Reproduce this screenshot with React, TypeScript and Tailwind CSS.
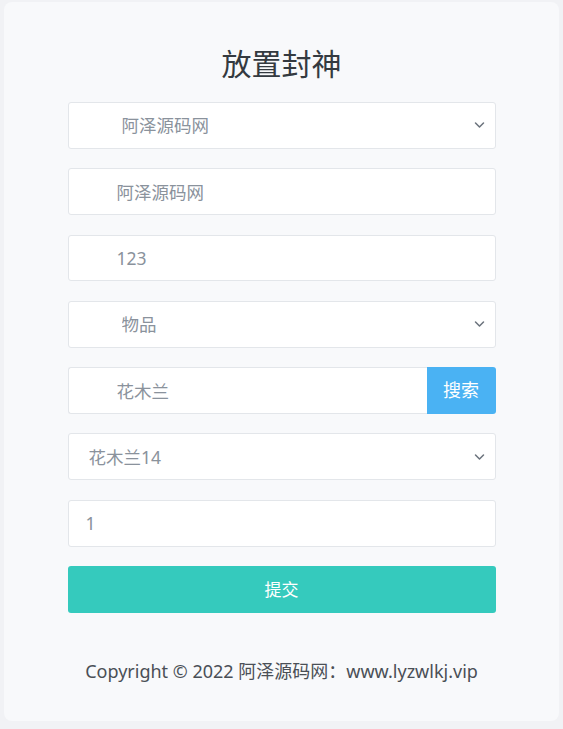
import { useState } from "react";

const font = { fontFamily: '"Noto Sans", "Noto Sans CJK SC", sans-serif' };

function Chevron() {
  return (
    <svg
      className="pointer-events-none absolute right-[11px] top-1/2 -translate-y-1/2"
      width="11"
      height="7"
      viewBox="0 0 11 7"
      fill="none"
    >
      <path d="M1.5 1.5 5.5 5.5l4-4" stroke="#6a727c" strokeWidth="1.5" strokeLinecap="round" strokeLinejoin="round" />
    </svg>
  );
}

function SelectBox({ value, pad }: { value: string; pad: string }) {
  return (
    <div className="relative h-[46.8px] w-full">
      <select
        defaultValue={value}
        style={font}
        className={`h-full w-full appearance-none rounded-[3px] border border-[#e3e6ea] bg-white ${pad} text-[17.5px] text-[#8a929c] outline-none`}
      >
        <option value={value}>{value}</option>
      </select>
      <Chevron />
    </div>
  );
}

function TextBox({ value, pad }: { value: string; pad: string }) {
  const [v, setV] = useState(value);
  return (
    <input
      value={v}
      onChange={(e) => setV(e.target.value)}
      style={font}
      className={`h-[46.8px] w-full rounded-[3px] border border-[#e3e6ea] bg-white ${pad} text-[17.5px] text-[#8a929c] outline-none`}
    />
  );
}

export default function App() {
  return (
    <div className="h-[729px] w-full bg-[#f1f2f5] px-[4px] pt-[2px]" style={font}>
      <div className="flex h-[719px] flex-col items-center rounded-[8px] bg-[#f8f9fb] pt-[43px]">
        <h1 className="mb-[19px] text-[30px] leading-[38px] text-[#343a40]">放置封神</h1>

        <form className="flex w-[428px] flex-col gap-[19.5px]" onSubmit={(e) => e.preventDefault()}>
          <SelectBox value="阿泽源码网" pad="pl-[53px]" />
          <TextBox value="阿泽源码网" pad="pl-[48px]" />
          <TextBox value="123" pad="pl-[48px]" />
          <SelectBox value="物品" pad="pl-[53px]" />

          <div className="flex h-[46.8px]">
            <input
              defaultValue="花木兰"
              style={font}
              className="h-full min-w-0 flex-1 rounded-l-[3px] border border-r-0 border-[#e3e6ea] bg-white pl-[48px] text-[17.5px] text-[#8a929c] outline-none"
            />
            <button
              type="button"
              className="h-full w-[69px] rounded-r-[3px] bg-[#4ab2f3] text-[18px] text-white"
            >
              搜索
            </button>
          </div>

          <SelectBox value="花木兰14" pad="pl-[20px]" />
          <TextBox value="1" pad="pl-[17px]" />

          <button type="submit" className="h-[46.8px] w-full rounded-[3px] bg-[#35cabd] text-[17px] text-white">
            提交
          </button>
        </form>

        <p className="mt-[45px] text-[18px] leading-[26px] text-[#4a4f56]">
          Copyright © 2022 阿泽源码网：www.lyzwlkj.vip
        </p>
      </div>
    </div>
  );
}
